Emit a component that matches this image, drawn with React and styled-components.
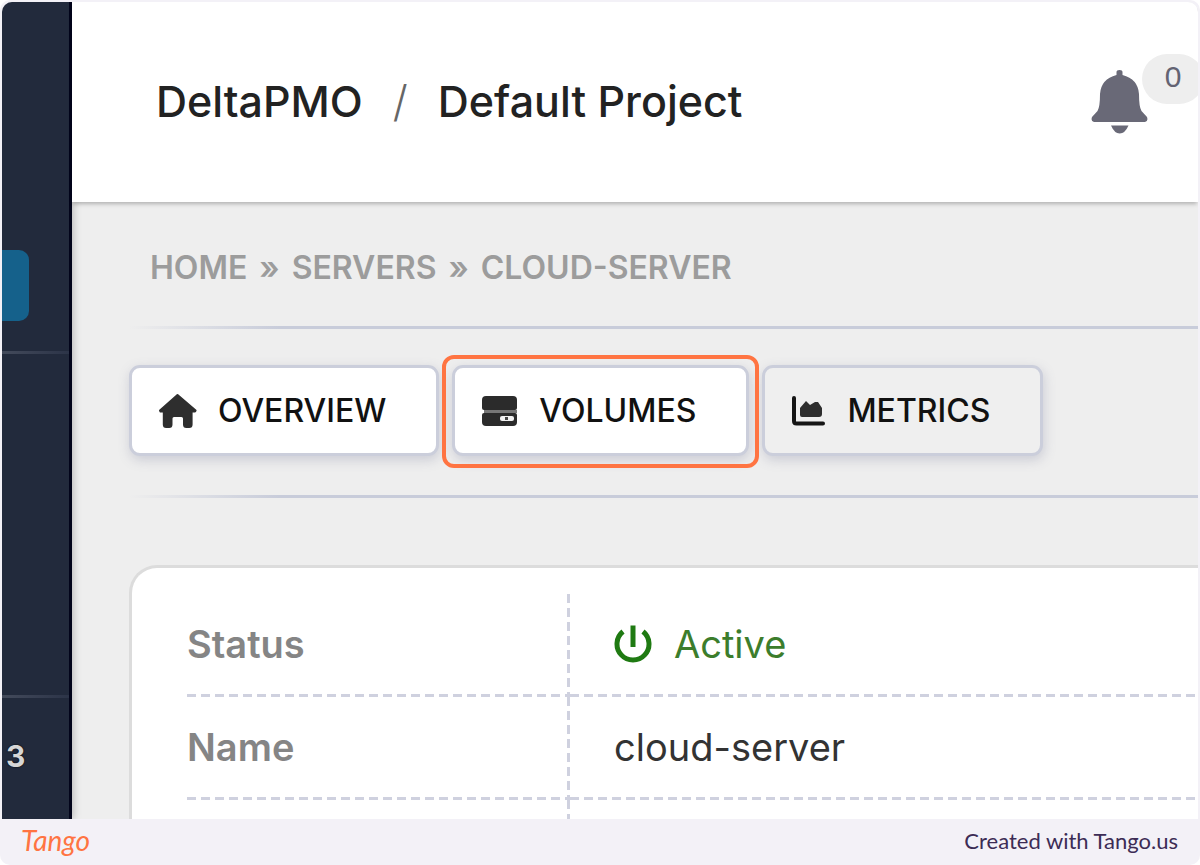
import React from 'react';
import styled, { createGlobalStyle } from 'styled-components';

const GlobalStyle = createGlobalStyle`
  * { box-sizing: border-box; }
  body { margin: 0; background: #fff; font-family: Inter, "Liberation Sans", sans-serif; }
`;

const Frame = styled.div`
  height: 100vh; display: flex; flex-direction: column; overflow: hidden;
  background: #f3f1f7; border-radius: 10px; padding: 2px 2px 0;
`;
const Screen = styled.div`
  flex: 1; min-height: 0; display: flex; overflow: hidden;
  background: #eee; border-radius: 10px 10px 0 0;
`;

const Sidebar = styled.nav`
  flex: 0 0 70px; display: flex; flex-direction: column; padding-top: 248px; z-index: 2;
  background: #222a3c; border-right: 3px solid #02041a; box-shadow: 1px 0 8px rgba(0, 0, 0, 0.25);
`;
const SideLink = styled.a`
  width: 27px; height: 71px; background: #15618b; border-radius: 0 10px 10px 0;
`;
const SideRule = styled.hr`
  width: 100%; height: 3px; border: 0; margin: ${props => props.gap}px 0 0;
  background: linear-gradient(to right, #434a5b, #2c3448);
`;
const SideCount = styled.span`
  margin-top: 38px; padding-left: 4px; font-size: 30px; line-height: 40px; font-weight: 700;
  color: #d6d6d6; text-shadow: 0 0 2px #000;
`;

const Column = styled.div`
  flex: 1; min-width: 0; display: flex; flex-direction: column;
`;
const Header = styled.header`
  flex: 0 0 200px; display: flex; align-items: center; justify-content: space-between;
  padding: 0 49px 0 84px; background: #fff; box-shadow: 0 3px 4px -1px rgba(0, 0, 0, 0.25); z-index: 3;
`;
const Path = styled.div`
  display: flex; gap: 30px; padding-bottom: 2px;
  font-size: 43px; line-height: 52px; font-weight: 500; color: #222;
`;
const Slash = styled.span`
  font-weight: 300; color: #666;
`;
const BellButton = styled.button`
  position: relative; display: flex; padding: 0; border: 0; background: none; cursor: pointer;
`;
const Badge = styled.span`
  position: absolute; left: 51px; top: -15px; width: 62px; height: 50px; line-height: 46px;
  border-radius: 25px; background: #eee; color: #636373; font-size: 30px; font-weight: 500; text-align: center;
`;

const Main = styled.main`
  flex: 1; min-height: 0; display: flex; flex-direction: column; padding: 46px 0 0 57px;
`;
const Crumbs = styled.nav`
  display: flex; gap: 12px; padding-left: 21px;
  font-size: 32px; line-height: 40px; font-weight: 600; color: #9c9c9c;
  a { color: inherit; text-decoration: none; }
`;
const Rule = styled.hr`
  flex: none; width: 100%; height: 3px; border: 0; margin: ${props => props.top}px 0 0;
  background: linear-gradient(to right, rgba(200, 204, 218, 0), #c8ccda 14%);
`;
const Tabs = styled.div`
  display: flex; gap: 13px; margin-top: 36px;
`;
const Tab = styled.button`
  position: relative; display: flex; align-items: center; gap: 20px; height: 91px; padding: 0 50px 0 26px;
  border: 3px solid #cbcedb; border-radius: 11px; background: ${props => props.plain ? '#efefef' : '#fff'};
  box-shadow: 1px 4px 12px rgba(100, 105, 140, 0.25);
  font-family: inherit; font-size: 32px; font-weight: 500; color: #111; cursor: pointer;
`;
const Ring = styled.span`
  position: absolute; inset: -13px -13px -15px; border: 4px solid #ff7442; border-radius: 12px; z-index: 1;
`;

const Card = styled.section`
  flex: 1; min-height: 0; overflow: hidden; margin-top: 67px; padding: 26px 0 0 55px;
  background: #fff; border: 3px solid #dcdcdc; border-width: 3px 0 0 3px; border-radius: 28px 0 0 0;
`;
const Table = styled.table`
  width: 100%; border-collapse: collapse; font-size: 38px; line-height: 48px;
`;
const dash = '#cfd1df 0 9px, transparent 9px 14px';
const Label = styled.th`
  width: 383px; height: 103px; padding: 0 0 4px; text-align: left; font-weight: 600; color: #858585;
  background:
    repeating-linear-gradient(to right, ${dash}) left bottom / 100% 3px no-repeat,
    repeating-linear-gradient(to bottom, ${dash}) right top / 3px 100% no-repeat;
`;
const Value = styled.td`
  padding: 0 0 4px 44px; color: ${props => props.ok ? '#3c7d2c' : '#333'};
  background: repeating-linear-gradient(to right, ${dash}) left bottom / 100% 3px no-repeat;
`;
const Inline = styled.span`
  display: flex; align-items: center; gap: 22px;
`;

const Footer = styled.footer`
  flex: 0 0 46px; display: flex; align-items: center; justify-content: space-between; padding: 0 20px 4px 19px;
`;
const Brand = styled.a`
  font-family: Lato, sans-serif; font-size: 28px; font-style: italic; font-weight: 400;
  color: #ff7442; text-decoration: none;
`;
const Credit = styled.span`
  font-family: Lato, sans-serif; font-size: 22px; color: #3c2c55;
`;

const HouseIcon = () => (
  <svg width="40" height="36" viewBox="0 0 40 36" fill="#2e2e2e" stroke="#2e2e2e" strokeLinejoin="round" aria-hidden="true">
    <path strokeWidth="2" d="M19.5 2 L2 17.5 L2.5 18.5 H5.8 V31.5 Q5.8 34 8.2 34 H11.2 Q13.5 34 13.5 31.5 V25.5 Q13.5 23 16 23 H23.5 Q26 23 26 25.5 V31.5 Q26 34 28.4 34 H31.2 Q33.6 34 33.6 31.5 V18.5 H37 L37.6 17.5 Z" />
  </svg>
);

const DrivesIcon = () => (
  <svg width="38" height="32" viewBox="0 0 38 32" aria-hidden="true">
    <path fill="#2b2b2b" d="M5 1 H32 Q36 1 36 5 V13 Q36 15 34 15 H3 Q1 15 1 13 V5 Q1 1 5 1Z" />
    <path fill="#777" d="M3 15 H36 V18 H3Z" />
    <path fill="#2b2b2b" d="M3 18 H34 Q36 18 36 20 V27 Q36 31 32 31 H5 Q1 31 1 27 V20 Q1 18 3 18Z" />
    <rect x="19" y="21" width="14" height="5" rx="2" fill="#f2f2f2" />
    <rect x="24" y="22" width="3" height="3" fill="#444" />
  </svg>
);

const ChartIcon = () => (
  <svg width="36" height="32" viewBox="0 0 36 32" fill="none" aria-hidden="true">
    <path stroke="#151515" strokeWidth="4" strokeLinejoin="round" strokeLinecap="round" d="M3 3 V26 Q3 28.5 5.5 28.5 H32" />
    <path fill="#2e2e2e" d="M9 20 V13 L15 6 L19 10 L24 7 H27 L31 13 V19 Q31 22 28 22 H11 Q9 22 9 20Z" />
  </svg>
);

const BellIcon = () => (
  <svg width="58" height="66" viewBox="0 0 58 66" fill="#696977" aria-hidden="true">
    <path d="M25.5 3 Q25.5 1 28.5 1 Q31.5 1 31.5 3 V6 Q47 10 48 25 Q48 38 50.5 42 L56 48 Q57.5 52 54 53 H3 Q-.5 52 1 48 L6.5 42 Q9 38 9 25 Q10 10 25.5 6Z" />
    <path d="M20 56.5 H37.5 Q34 64.5 28.7 64.5 Q23.5 64.5 20 56.5Z" />
  </svg>
);

const PowerIcon = () => (
  <svg width="38" height="38" viewBox="0 0 38 38" fill="none" stroke="#1f7a12" strokeWidth="5" aria-hidden="true">
    <path d="M9 6.5 A16 16 0 1 0 29 6.5" />
    <path d="M19 0.5 V22" />
  </svg>
);

const TABS = [
  { name: 'OVERVIEW', icon: <HouseIcon /> },
  { name: 'VOLUMES', icon: <DrivesIcon />, ring: true },
  { name: 'METRICS', icon: <ChartIcon />, plain: true },
];

const App = () => {
  return (
    <>
      <GlobalStyle />
      <Frame>
        <Screen>
          <Sidebar>
            <SideLink href="#servers" aria-label="Servers" />
            <SideRule gap={30} />
            <SideRule gap={341} />
            <SideCount>3</SideCount>
          </Sidebar>

          <Column>
            <Header>
              <Path>
                <span>DeltaPMO</span>
                <Slash>/</Slash>
                <span>Default Project</span>
              </Path>
              <BellButton aria-label="Notifications">
                <BellIcon />
                <Badge>0</Badge>
              </BellButton>
            </Header>

            <Main>
              <Crumbs>
                <a href="#home">HOME</a>
                <span>»</span>
                <a href="#servers">SERVERS</a>
                <span>»</span>
                <a href="#cloud-server">CLOUD-SERVER</a>
              </Crumbs>
              <Rule top={38} />

              <Tabs>
                {TABS.map(tab => (
                  <Tab key={tab.name} plain={tab.plain ? 1 : undefined}>
                    {tab.icon}
                    {tab.name}
                    {tab.ring && <Ring />}
                  </Tab>
                ))}
              </Tabs>
              <Rule top={39} />

              {/* Server details */}
              <Card>
                <Table>
                  <tbody>
                    <tr>
                      <Label scope="row">Status</Label>
                      <Value ok={1}><Inline><PowerIcon />Active</Inline></Value>
                    </tr>
                    <tr>
                      <Label scope="row">Name</Label>
                      <Value>cloud-server</Value>
                    </tr>
                    <tr>
                      <Label scope="row" />
                      <Value />
                    </tr>
                  </tbody>
                </Table>
              </Card>
            </Main>
          </Column>
        </Screen>

        <Footer>
          <Brand href="#tango">Tango</Brand>
          <Credit>Created with Tango.us</Credit>
        </Footer>
      </Frame>
    </>
  );
};

export default App;
